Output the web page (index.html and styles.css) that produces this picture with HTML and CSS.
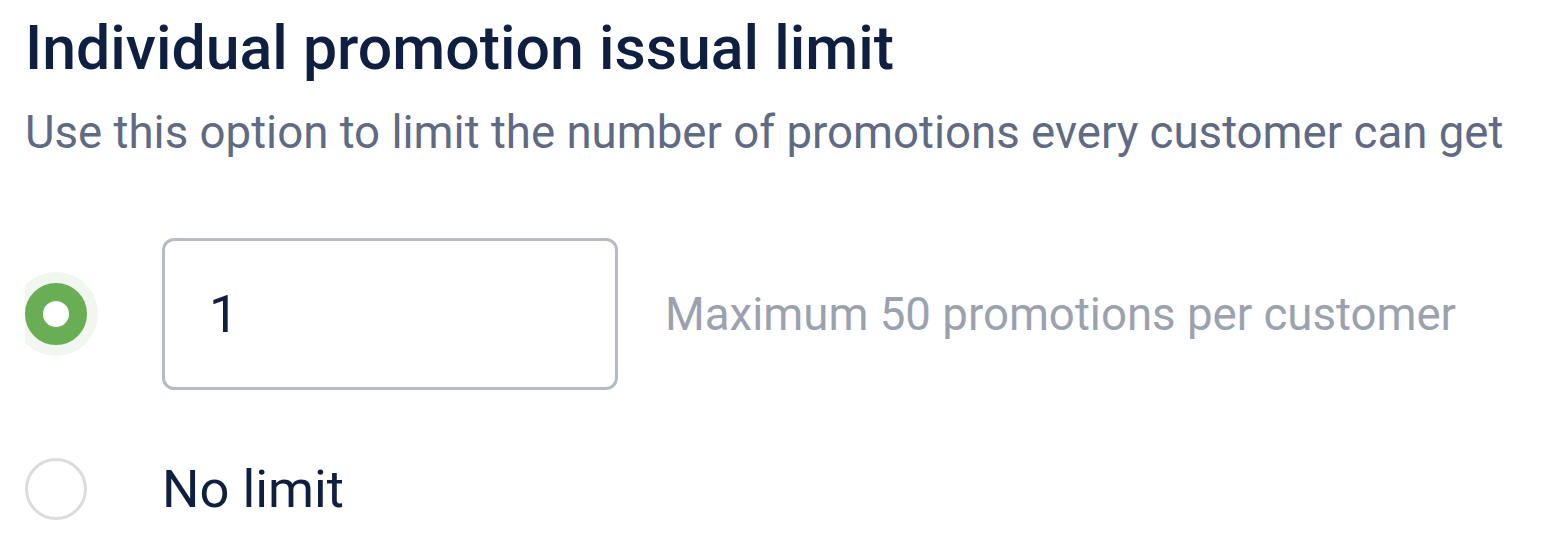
FILE: index.html
```html
<!DOCTYPE html>
<html>
<head>
<meta charset="utf-8">
<link rel="stylesheet" href="styles.css">
</head>
<body>
<div class="panel">
  <h1 class="title">Individual promotion issual limit</h1>
  <p class="subtitle">Use this option to limit the number of promotions every customer can get</p>
  <div class="options">
    <div class="option">
      <span class="radio radio--checked"></span>
      <div class="field"><span class="field-value">1</span></div>
      <span class="hint">Maximum 50 promotions per customer</span>
    </div>
    <div class="option">
      <span class="radio"></span>
      <span class="label">No limit</span>
    </div>
  </div>
</div>
</body>
</html>
```
FILE: styles.css
```css
html, body {
  margin: 0;
  padding: 0;
  background: #ffffff;
}
body {
  font-family: Roboto, "Liberation Sans", sans-serif;
}
.panel {
  padding: 0 0 0 25px;
  overflow: hidden;
}
.title {
  margin: 0;
  padding-top: 13px;
  font-size: 60.8px;
  line-height: 72px;
  font-weight: 500;
  color: #0f1f42;
}
.subtitle {
  margin: 21px 0 0;
  font-size: 45.6px;
  line-height: 54px;
  color: #5f6a84;
}
.options {
  display: flex;
  flex-direction: column;
  gap: 68px;
  margin-top: 78px;
  overflow: hidden;
  padding-bottom: 20px;
}
.option {
  display: flex;
  align-items: center;
}
.radio {
  flex: none;
  width: 56px;
  height: 56px;
  border: 3px solid #dcdcdc;
  border-radius: 50%;
  background: #fff;
  margin-right: 75px;
  box-sizing: content-box;
}
.radio--checked {
  width: 26px;
  height: 26px;
  border: 18px solid #69ad55;
  box-shadow: 0 0 0 11px #f1f6ef;
}
.field {
  flex: none;
  border: 3px solid #b5bcc7;
  border-radius: 12px;
  display: flex;
  align-items: center;
  padding-left: 44px;
  box-sizing: border-box;
  width: 456px;
  height: 152px;
}
.field-value {
  font-size: 52.5px;
  color: #0f1f42;
}
.hint {
  margin-left: 47px;
  font-size: 45.6px;
  color: #9aa2b0;
}
.label {
  font-size: 52.5px;
  line-height: 62px;
  color: #0f1f42;
}
```
